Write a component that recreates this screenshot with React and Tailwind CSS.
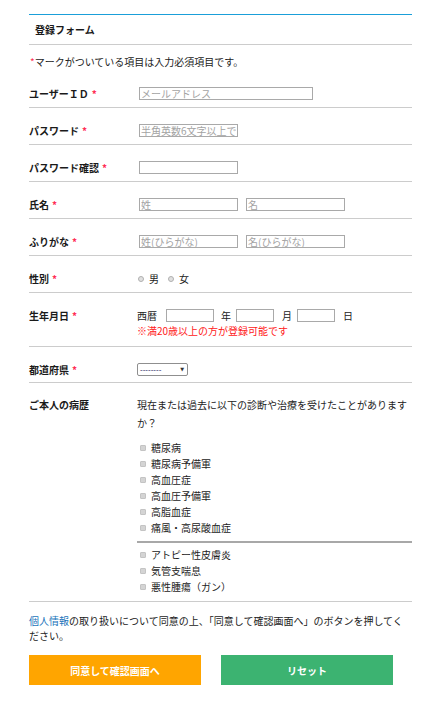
import React from "react";

function Req() {
  return <span className="text-[#ff2d55] ml-[3px] font-bold">*</span>;
}

function Row({ label, req = true, children, rowClass = "pt-[16px] pb-[7px] items-center", labelClass = "" }) {
  return (
    <div className={`flex border-b border-[#cccccc] ${rowClass}`}>
      <div className={`w-[108px] shrink-0 font-bold text-[10px] leading-[13px] text-[#1a1a1a] ${labelClass}`}>
        {label}
        {req && <Req />}
      </div>
      <div className="flex-1">{children}</div>
    </div>
  );
}

function Inp({ w, ph, className = "" }) {
  return (
    <input
      className={`block h-[13px] border border-[#a9a9a9] bg-white px-[1px] text-[10px] leading-[11px] text-[#333] placeholder:text-[#a3a3a3] outline-none ${w} ${className}`}
      placeholder={ph}
    />
  );
}

function Check({ children }) {
  return (
    <div className="flex items-center h-[16px] leading-[16px]">
      <span className="ml-[3px] w-[6px] h-[6px] rounded-[1px] bg-[#d4d4d4] border border-[#c4c4c4]" />
      <span className="ml-[5px] text-[10px] text-[#222]">{children}</span>
    </div>
  );
}

function Radio({ children }) {
  return (
    <div className="flex items-center">
      <span className="w-[6px] h-[6px] rounded-full bg-[#e0e0e0] border border-[#b0b0b0]" />
      <span className="ml-[5px] text-[10px] text-[#222]">{children}</span>
    </div>
  );
}

export default function App() {
  return (
    <div className="w-[441px] min-h-[701px] bg-white pt-[14px] px-[29px] font-['Noto_Sans_CJK_JP','Noto_Sans',sans-serif] text-[#333]">
      <div className="border-t border-[#1a9fd9] border-b border-b-[#cccccc] h-[31px] flex items-center pl-[6px] text-[10px] font-bold text-[#1a1a1a]">
        登録フォーム
      </div>
      <div className="pt-[11px] pb-[3px] text-[10px] leading-[12px] pl-[1px] text-[#222]">
        <span className="text-[#ff2d55]">*</span>マークがついている項目は入力必須項目です。
      </div>

      <Row label="ユーザーＩＤ">
        <Inp w="w-[174px]" ph="メールアドレス" className="ml-[2px]" />
      </Row>
      <Row label="パスワード">
        <Inp w="w-[99px]" ph="半角英数6文字以上で入力してください" className="ml-[2px]" />
      </Row>
      <Row label="パスワード確認">
        <Inp w="w-[99px]" ph="" className="ml-[2px]" />
      </Row>
      <Row label="氏名">
        <div className="flex">
          <Inp w="w-[99px]" ph="姓" className="ml-[2px]" />
          <Inp w="w-[99px]" ph="名" className="ml-[8px]" />
        </div>
      </Row>
      <Row label="ふりがな">
        <div className="flex">
          <Inp w="w-[99px]" ph="姓(ひらがな)" className="ml-[2px]" />
          <Inp w="w-[99px]" ph="名(ひらがな)" className="ml-[8px]" />
        </div>
      </Row>
      <Row label="性別">
        <div className="flex items-center h-[13px] ml-[1px]">
          <Radio>男</Radio>
          <div className="ml-[9px]">
            <Radio>女</Radio>
          </div>
        </div>
      </Row>
      <Row label="生年月日" rowClass="pt-[16px] pb-[8px] items-start">
        <div className="flex items-center h-[13px] text-[10px] text-[#222]">
          <span>西暦</span>
          <Inp w="w-[48px]" ph="" className="ml-[9px]" />
          <span className="ml-[7px]">年</span>
          <Inp w="w-[38px]" ph="" className="ml-[5px]" />
          <span className="ml-[8px]">月</span>
          <Inp w="w-[38px]" ph="" className="ml-[5px]" />
          <span className="ml-[8px]">日</span>
        </div>
        <div className="mt-[2px] text-[10px] leading-[14px] text-[#ff2020]">※満20歳以上の方が登録可能です</div>
      </Row>
      <Row label="都道府県" rowClass="pt-[16px] pb-[6px] items-center">
        <div className="w-[51px] h-[13px] border border-[#8f8f8f] rounded-[2px] flex items-center justify-between pl-[2px] pr-[3px] bg-white">
          <span className="font-['Liberation_Sans',sans-serif] text-[8px] leading-[8px] text-[#1a1a60]">--------</span>
          <span className="font-['DejaVu_Sans',sans-serif] text-[5px] leading-[5px] text-[#333]">▼</span>
        </div>
      </Row>
      <Row label="ご本人の病歴" req={false} rowClass="pt-[13px] pb-[6px] items-start" labelClass="leading-[18px]">
        <div className="text-[10px] leading-[18px] text-[#222]">
          現在または過去に以下の診断や治療を受けたことがありますか？
        </div>
        <div className="mt-[8px]">
          <Check>糖尿病</Check>
          <Check>糖尿病予備軍</Check>
          <Check>高血圧症</Check>
          <Check>高血圧予備軍</Check>
          <Check>高脂血症</Check>
          <Check>痛風・高尿酸血症</Check>
        </div>
        <div className="mt-[5px] h-[2px] bg-[#a8a8a8]" />
        <div className="mt-[4px]">
          <Check>アトピー性皮膚炎</Check>
          <Check>気管支喘息</Check>
          <Check>悪性腫瘍（ガン）</Check>
        </div>
      </Row>

      <p className="pt-[11px] text-[10px] leading-[15px] text-[#222]">
        <span className="text-[#1a75bb]">個人情報</span>の取り扱いについて同意の上、「同意して確認画面へ」のボタンを押してください。
      </p>
      <div className="mt-[12px] flex gap-[20px]">
        <button className="w-[172px] h-[30px] bg-[#ffa500] text-white text-[10px] font-bold">同意して確認画面へ</button>
        <button className="w-[172px] h-[30px] bg-[#3cb371] text-white text-[10px] font-bold">リセット</button>
      </div>
    </div>
  );
}
